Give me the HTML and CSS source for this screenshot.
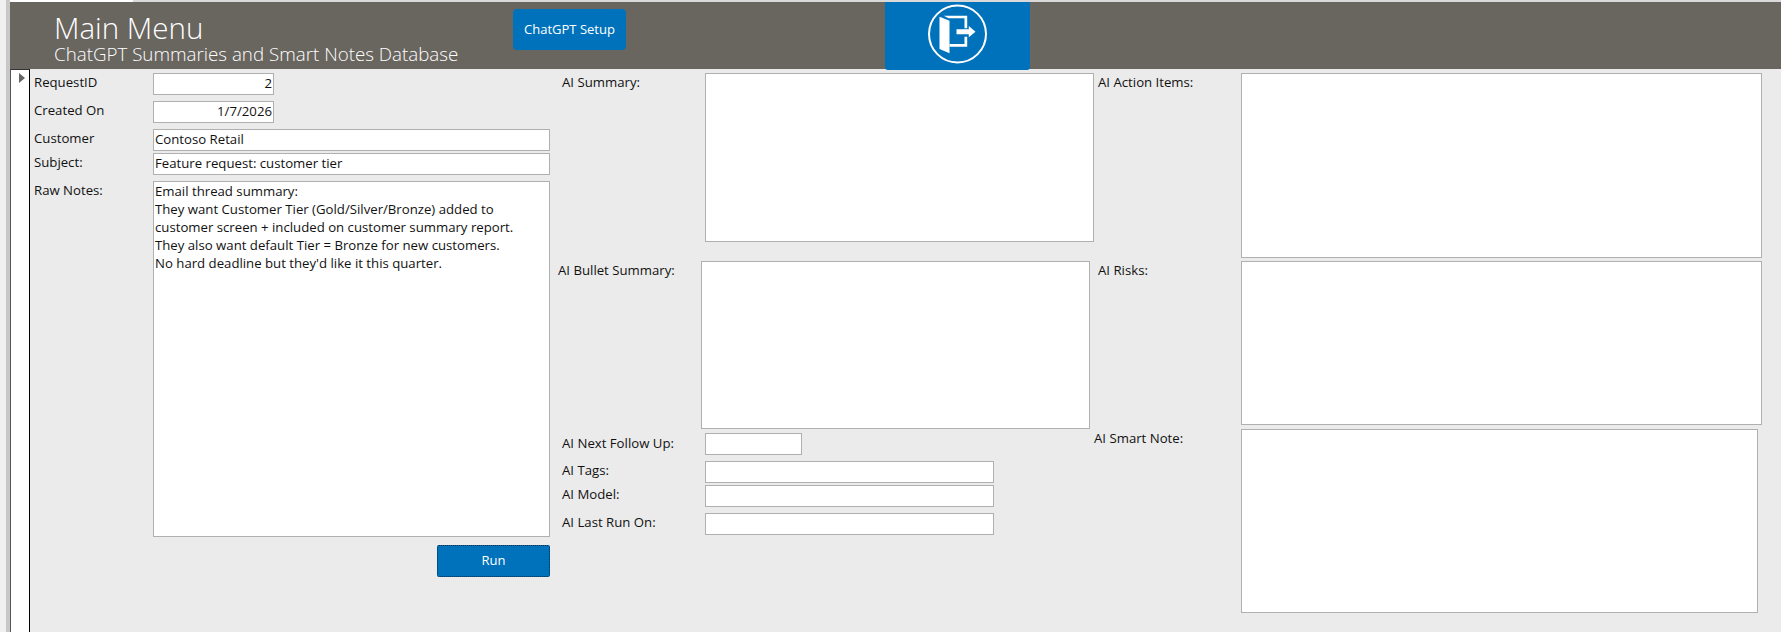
FILE: index.html
```html
<!DOCTYPE html>
<html lang="en">
<head>
<meta charset="utf-8">
<title>Main Menu</title>
<link rel="stylesheet" href="styles.css">
</head>
<body>
<div class="app">
  <div class="gutter"></div>
  <div class="window">
    <div class="tabstrip"><div class="tab"></div></div>
    <header class="header">
      <div class="titles">
        <div class="title">Main Menu</div>
        <div class="subtitle">ChatGPT Summaries and Smart Notes Database</div>
      </div>
      <button class="setup">ChatGPT Setup</button>
      <div class="logo">
        <svg width="62" height="62" viewBox="0 0 62 62">
          <circle cx="30.500" cy="31" r="28.500" fill="none" stroke="#fff" stroke-width="2"/>
          <path d="M12.500 13.700 L22.500 17.700 V50.300 L12.500 46 Z" fill="#fff"/>
          <path d="M16.800 12.700 H40.200 V25.300 H37.500 V15.300 H21.500 Z M37.500 33.700 H40.200 V43.700 H22.500 V41 H37.500 Z" fill="#fff"/>
          <path d="M29.500 26.300 H41.800 V23 L48.500 28.700 L41.800 34.300 V31.300 H29.500 Z" fill="#fff"/>
        </svg>
      </div>
    </header>
    <div class="body">
      <div class="selector"><span class="arrow"></span></div>
      <main class="form">
        <section class="col col-left">
          <div class="row row-id"><label>RequestID</label><div class="field short num">2</div></div>
          <div class="row row-created"><label>Created On</label><div class="field short num">1/7/2026</div></div>
          <div class="row row-customer"><label>Customer</label><div class="field wide">Contoso Retail</div></div>
          <div class="row row-subject"><label>Subject:</label><div class="field wide">Feature request: customer tier</div></div>
          <div class="row row-raw"><label>Raw Notes:</label>
            <div class="field wide notes">Email thread summary:<br>They want Customer Tier (Gold/Silver/Bronze) added to<br>customer screen + included on customer summary report.<br>They also want default Tier = Bronze for new customers.<br>No hard deadline but they'd like it this quarter.</div>
          </div>
          <div class="run-row"><button class="run">Run</button></div>
        </section>
        <section class="col col-mid">
          <div class="row m-summary"><label>AI Summary:</label><div class="field box-a"></div></div>
          <div class="row m-bullet"><label>AI Bullet Summary:</label><div class="field box-b"></div></div>
          <div class="row m-follow"><label>AI Next Follow Up:</label><div class="field follow"></div></div>
          <div class="row m-tags"><label>AI Tags:</label><div class="field mid"></div></div>
          <div class="row m-model"><label>AI Model:</label><div class="field mid"></div></div>
          <div class="row m-last"><label>AI Last Run On:</label><div class="field mid"></div></div>
        </section>
        <section class="col col-right">
          <div class="row r-action"><label>AI Action Items:</label><div class="field box-c"></div></div>
          <div class="row r-risks"><label>AI Risks:</label><div class="field box-d"></div></div>
          <div class="row r-smart"><label>AI Smart Note:</label><div class="field box-e"></div></div>
        </section>
      </main>
    </div>
  </div>
</div>
</body>
</html>
```
FILE: styles.css
```css
* { box-sizing: border-box; }
html, body { margin: 0; height: 100%; }
body { background: #ebebeb; font-family: "Open Sans", "Noto Sans", sans-serif; font-size: 13.200px; color: #111; overflow: hidden; }
.app { display: flex; height: 632px; }
.gutter { width: 10px; background: #f0f0f0; border-right: 4px solid #c8c8c8; }
.window { flex: 1; display: flex; flex-direction: column; min-width: 0; }
.tabstrip { height: 2px; background: #d9d9d9; }
.tab { width: 123px; height: 2px; background: #fff; }
.header { height: 67px; background: #69655f; display: flex; color: #fff; }
.titles { width: 503px; padding: 10px 0 0 44px; }
.title { font-size: 29.500px; line-height: 32px; font-weight: 300; }
.subtitle { font-size: 18.750px; line-height: 20px; font-weight: 300; white-space: nowrap; }
.setup { width: 113px; height: 41px; margin-top: 7px; border: 0; border-radius: 4px; background: #0072bc; color: #fff; font: 13px "Open Sans", sans-serif; padding: 0 0 2px; }
.logo { width: 145px; height: 68px; margin-left: 259px; background: #0072bc; border-radius: 0 0 3px 3px; display: flex; align-items: flex-start; justify-content: center; padding-top: 1px; }
.body { flex: 1; display: flex; min-height: 0; }
.selector { width: 20px; background: #fff; border-left: 1px solid #555; border-right: 1px solid #000; padding: 3px 0 0 8px; border-top: 1px solid #333; }
.arrow { display: block; width: 0; height: 0; border-left: 6px solid #666; border-top: 5.500px solid transparent; border-bottom: 5.500px solid transparent; }
.form { flex: 1; display: flex; min-width: 0; }
.col { display: flex; flex-direction: column; }
.row { display: flex; }
label { display: block; white-space: nowrap; line-height: 18px; }
.field { background: #fff; border: 1px solid #b0b0b0; line-height: 18px; padding: 0 1px; white-space: nowrap; }
.col-left { width: 520px; padding: 4px 0 0 4px; }
.col-left label { width: 119px; }
.short { width: 121px; height: 22px; }
.num { text-align: right; }
.wide { width: 397px; height: 22px; }
.row-created { margin-top: 6px; }
.row-customer { margin-top: 6px; }
.row-subject { margin-top: 2px; }
.row-raw { margin-top: 6px; }
.notes { height: 356px; }
.run-row { display: flex; justify-content: flex-end; width: 516px; margin-top: 8px; }
.run { width: 113px; height: 32px; border: 1px dotted #0b2a45; border-radius: 2px; background: #0072bc; color: #fff; font: 13px "Open Sans", sans-serif; padding: 0 0 3px; }
.col-mid { width: 548px; padding-top: 4px; }
.col-mid label { width: 155px; padding-left: 12px; }
.box-a { width: 389px; height: 169px; }
.box-b { width: 389px; height: 168px; }
.m-bullet { margin-top: 19px; margin-left: -4px; }
.m-follow { margin-top: 4px; }
.m-follow label { padding-top: 1px; }
.follow { width: 97px; height: 22px; }
.mid { width: 289px; height: 22px; }
.m-tags { margin-top: 6px; }
.m-model { margin-top: 2px; }
.m-last { margin-top: 6px; }
.col-right { padding-top: 4px; }
.col-right label { width: 143px; }
.box-c { width: 521px; height: 185px; }
.box-d { width: 521px; height: 164px; }
.box-e { width: 517px; height: 184px; }
.r-risks { margin-top: 3px; }
.r-smart { margin-top: 4px; margin-left: -4px; }
.r-smart label { width: 147px; }
```
